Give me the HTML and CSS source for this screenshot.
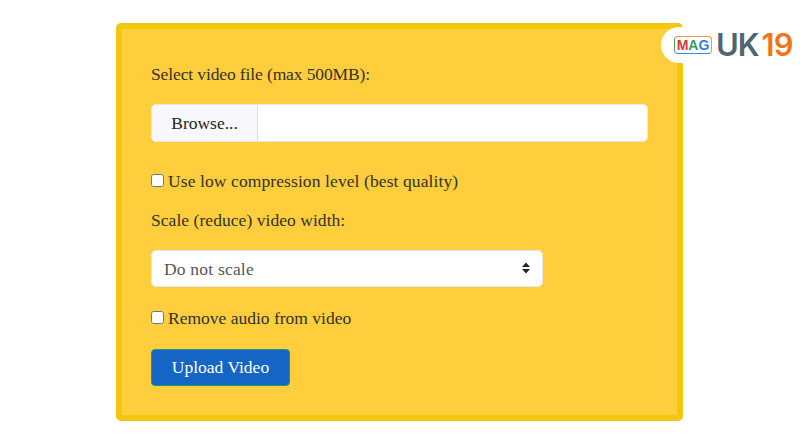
FILE: index.html
```html
<!DOCTYPE html>
<html lang="en">
<head>
<meta charset="utf-8">
<title>Video compressor</title>
<link rel="stylesheet" href="styles.css">
</head>
<body>
<div class="logo">
  <span class="mag"><span class="mag-m">M</span><span class="mag-a">A</span><span class="mag-g">G</span></span>
  <span class="brand">UK</span><span class="num">19</span>
</div>
<form class="card">
  <label class="label first" for="file">Select video file (max 500MB):</label>
  <div class="file" id="file"><span class="browse">Browse...</span></div>
  <label class="check low"><input type="checkbox">Use low compression level (best quality)</label>
  <label class="label scale" for="scale">Scale (reduce) video width:</label>
  <div class="select-wrap">
    <select id="scale" class="select"><option>Do not scale</option></select>
    <svg class="arrows" width="10" height="12" viewBox="0 0 10 12"><path d="M5 .5 9 5H1zM5 11.5 1 7h8z" fill="#212529"/></svg>
  </div>
  <label class="check audio"><input type="checkbox">Remove audio from video</label>
  <button type="button" class="upload">Upload Video</button>
</form>
</body>
</html>
```
FILE: styles.css
```css
* { box-sizing: border-box; }
html, body { margin: 0; padding: 0; background: #fff; }
body {
  height: 444px;
  overflow: hidden;
  padding: 23px 0 0 116px;
  font-family: "Liberation Serif", serif;
  font-size: 17.5px;
  color: #33312b;
}
.card {
  width: 567px;
  height: 398px;
  padding: 32px 29px 0;
  background: #ffce3d;
  border: 6px solid #f2c80f;
  border-radius: 5px;
  display: flex;
  flex-direction: column;
  align-items: flex-start;
}
.label, .check { line-height: 26px; height: 26px; display: flex; align-items: center; }
.first { letter-spacing: -.12px; }
.file {
  margin-top: 17px;
  width: 497px;
  height: 38px;
  background: #fff;
  border: 1px solid #e6e6ea;
  border-radius: 5px;
  display: flex;
  overflow: hidden;
}
.browse {
  width: 106px;
  background: #f8f8fc;
  border-right: 1px solid #dfdfe5;
  color: #212529;
  text-align: center;
  line-height: 36px;
}
.low { margin-top: 26px; letter-spacing: .1px; }
.check input {
  width: 13px;
  height: 13px;
  margin: 0 4px 2px 0;
  flex: none;
}
.scale { margin-top: 13px; letter-spacing: .05px; }
.select-wrap { position: relative; margin-top: 17px; width: 392px; height: 37px; }
.select {
  appearance: none;
  width: 100%;
  height: 100%;
  padding: 0 12px;
  background: #fff;
  border: 1px solid #e6e6ea;
  border-radius: 5px;
  font: inherit;
  letter-spacing: .2px;
  color: #55555f;
}
.arrows { position: absolute; right: 12px; top: 12px; }
.audio { margin-top: 18px; }
.upload {
  margin-top: 18px;
  width: 139px;
  height: 37px;
  padding: 0;
  background: #1565c4;
  border: 1px solid #1a9a7a;
  border-radius: 4px;
  color: #fff;
  font: inherit;
}
.logo {
  position: absolute;
  left: 661px;
  top: 27px;
  width: 139px;
  height: 36px;
  padding-left: 13px;
  background: #fff;
  border-radius: 18px 0 0 18px;
  display: flex;
  align-items: center;
  font-family: "Inter", sans-serif;
  font-weight: 600;
  line-height: 36px;
}
.mag {
  width: 38px;
  height: 18px;
  margin-right: 4px;
  border: 1px solid #ee9a3a;
  border-bottom-color: #3b8ee0;
  border-left-color: #4aa564;
  border-radius: 4px;
  font-family: "Liberation Sans", sans-serif;
  font-size: 14px;
  font-weight: 700;
  line-height: 16px;
  text-align: center;
}
.mag-m { color: #d9363e; }
.mag-a { color: #3a9a5c; }
.mag-g { color: #2f7fdc; }
.brand { font-size: 31px; color: #4f6672; letter-spacing: -1px; }
.num { font-size: 31px; color: #f0761a; margin-left: 3px; letter-spacing: -1px; }
```
